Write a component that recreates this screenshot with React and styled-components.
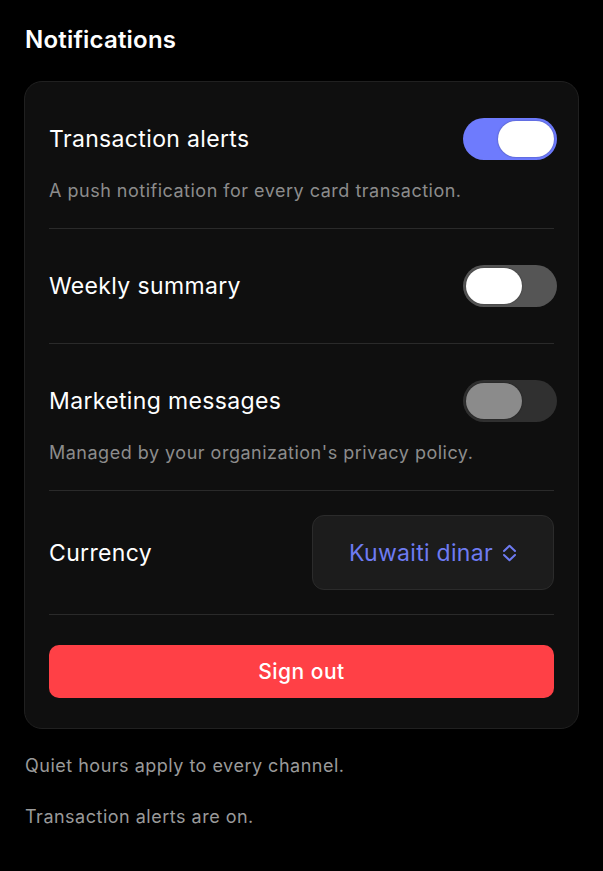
import React, { useState } from 'react';
import styled, { createGlobalStyle } from 'styled-components';

const GlobalStyle = createGlobalStyle`
  html, body {
    margin: 0;
    background: #000;
  }
  body {
    font-family: Inter, "Noto Sans", sans-serif;
    color: #fff;
    -webkit-font-smoothing: antialiased;
  }
`;

function UpDownIcon() {
  return (
    <svg width="15" height="18" viewBox="0 0 15 18" fill="none" stroke="currentColor"
      strokeWidth="2" strokeLinecap="round" strokeLinejoin="round">
      <path d="M2 7 L7.5 1.8 L13 7" />
      <path d="M2 11 L7.5 16.2 L13 11" />
    </svg>
  );
}

export default function App() {
  const [alerts, setAlerts] = useState(true);
  const [weekly, setWeekly] = useState(false);

  return (
    <Page>
      <GlobalStyle />
      <Title>Notifications</Title>
      <Card>
        <Section>
          <Row>
            <Label>Transaction alerts</Label>
            <Toggle on={alerts} onClick={() => setAlerts(!alerts)} aria-pressed={alerts}>
              <Knob on={alerts} />
            </Toggle>
          </Row>
          <Hint>A push notification for every card transaction.</Hint>
        </Section>
        <Section>
          <Row>
            <Label>Weekly summary</Label>
            <Toggle on={weekly} onClick={() => setWeekly(!weekly)} aria-pressed={weekly}>
              <Knob on={weekly} />
            </Toggle>
          </Row>
        </Section>
        <Section>
          <Row>
            <Label>Marketing messages</Label>
            <Toggle disabled>
              <Knob disabled />
            </Toggle>
          </Row>
          <Hint>Managed by your organization's privacy policy.</Hint>
        </Section>
        <Section>
          <SelectRow>
            <Label>Currency</Label>
            <Select>
              Kuwaiti dinar
              <UpDownIcon />
            </Select>
          </SelectRow>
        </Section>
        <ButtonSection>
          <SignOut>Sign out</SignOut>
        </ButtonSection>
      </Card>
      <Footer>
        <Note>Quiet hours apply to every channel.</Note>
        <Note>Transaction alerts are on.</Note>
      </Footer>
    </Page>
  );
}

const Page = styled.div`
  padding: 24px 24px 40px;
`;

const Title = styled.h1`
  margin: 0 0 25px 1px;
  font-size: 24px;
  line-height: 32px;
  font-weight: 600;
  letter-spacing: 0.2px;
`;

const Card = styled.div`
  background: #0f0f0f;
  border: 1px solid #202020;
  border-radius: 18px;
  padding: 0 24px;
`;

const Section = styled.div`
  padding: 24px 0;
  border-bottom: 1px solid #2a2a2a;
`;

const Row = styled.div`
  display: flex;
  align-items: center;
  justify-content: space-between;
  margin: 12px 0;
`;

const SelectRow = styled(Row)`
  margin: 0;
`;

const Label = styled.span`
  font-size: 23px;
  line-height: 28px;
  letter-spacing: 0.35px;
  color: #fff;
`;

const Hint = styled.p`
  margin: 18px 0 0;
  font-size: 18px;
  line-height: 26px;
  letter-spacing: 0.5px;
  color: #8c8c8c;
`;

const Toggle = styled.button`
  width: 94px;
  height: 42px;
  margin-right: -3px;
  padding: 3px;
  border: none;
  border-radius: 21px;
  display: flex;
  align-items: center;
  justify-content: ${p => (p.on ? 'flex-end' : 'flex-start')};
  background: ${p => (p.on ? '#6e7bfd' : p.disabled ? '#303030' : '#555555')};
  cursor: ${p => (p.disabled ? 'default' : 'pointer')};
`;

const Knob = styled.span`
  width: 56px;
  height: 36px;
  border-radius: 18px;
  background: ${p => (p.disabled ? '#8b8b8b' : '#fff')};
  box-shadow: 0 0 2px rgba(0, 0, 0, 0.4);
`;

const Select = styled.button`
  width: 242px;
  height: 75px;
  display: flex;
  align-items: center;
  justify-content: center;
  gap: 9px;
  background: #1c1c1c;
  border: 1px solid #2b2b2b;
  border-radius: 12px;
  color: #6e7bf2;
  font-family: inherit;
  font-size: 23px;
  letter-spacing: 0.3px;
  cursor: pointer;
`;

const ButtonSection = styled.div`
  padding: 30px 0;
`;

const SignOut = styled.button`
  width: 100%;
  height: 53px;
  border: none;
  border-radius: 10px;
  background: #ff4046;
  color: #fff;
  font-family: inherit;
  font-size: 21px;
  font-weight: 500;
  letter-spacing: 0.5px;
  cursor: pointer;
`;

const Footer = styled.div`
  padding: 25px 1px 0;
  display: flex;
  flex-direction: column;
  gap: 27px;
`;

const Note = styled.p`
  margin: 0;
  font-size: 18px;
  line-height: 24px;
  letter-spacing: 0.5px;
  color: #9a9a9a;
`;
